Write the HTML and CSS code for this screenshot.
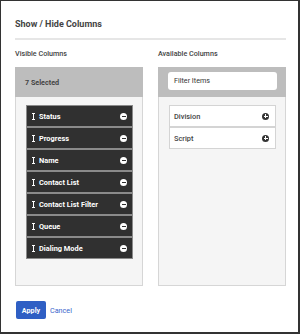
FILE: index.html
```html
<!DOCTYPE html>
<html>
<head>
<meta charset="utf-8">
<link rel="stylesheet" href="styles.css">
</head>
<body>
<div class="dialog">
  <h1 class="title">Show / Hide Columns</h1>
  <div class="divider"></div>
  <div class="columns">
    <div class="col">
      <div class="label">Visible Columns</div>
      <div class="panel">
        <div class="panel-head"><span class="selected">7 Selected</span></div>
        <div class="panel-body">
          <div class="item dark"><span class="grip"></span><span class="name">Status</span><span class="minus"></span></div>
          <div class="item dark"><span class="grip"></span><span class="name">Progress</span><span class="minus"></span></div>
          <div class="item dark"><span class="grip"></span><span class="name">Name</span><span class="minus"></span></div>
          <div class="item dark"><span class="grip"></span><span class="name">Contact List</span><span class="minus"></span></div>
          <div class="item dark"><span class="grip"></span><span class="name">Contact List Filter</span><span class="minus"></span></div>
          <div class="item dark"><span class="grip"></span><span class="name">Queue</span><span class="minus"></span></div>
          <div class="item dark"><span class="grip"></span><span class="name">Dialing Mode</span><span class="minus"></span></div>
        </div>
      </div>
    </div>
    <div class="col">
      <div class="label">Available Columns</div>
      <div class="panel">
        <div class="panel-head"><div class="filter">Filter Items</div></div>
        <div class="panel-body">
          <div class="item light"><span class="name">Division</span><span class="plus"></span></div>
          <div class="item light"><span class="name">Script</span><span class="plus"></span></div>
        </div>
      </div>
    </div>
  </div>
  <div class="actions">
    <button class="apply">Apply</button>
    <span class="cancel">Cancel</span>
  </div>
</div>
</body>
</html>
```
FILE: styles.css
```css
* { box-sizing: border-box; }
html, body { margin: 0; padding: 0; background: #fff; }
body { font-family: Roboto, "Liberation Sans", sans-serif; color: #444; }
.dialog {
  width: 300px; height: 334px;
  border-left: 1px solid #333; border-top: 1px solid #333;
  border-right: 2px solid #333; border-bottom: 2px solid #333;
  padding: 16px 12px 0 14px;
  background: #fff;
}
.title { margin: 0; font-size: 9px; line-height: 14px; font-weight: 700; color: #444; }
.divider { height: 2px; background: #e6e6e6; margin-top: 7px; }
.columns { display: flex; gap: 15px; margin-top: 8px; }
.col { width: 128px; }
.label { font-size: 7.2px; line-height: 12px; font-weight: 500; color: #444; }
.panel { margin-top: 7px; height: 219px; border: 1px solid #d6d6d6; background: #f5f5f5; display: flex; flex-direction: column; }
.panel-head { height: 30px; background: #bdbdbd; display: flex; align-items: center; flex: none; margin: -1px -1px 0 -1px; padding: 0 9px 0 10px; }
.selected { font-size: 7.2px; font-weight: 700; color: #444; }
.filter { width: 100%; height: 18px; background: #fff; border-radius: 3px; font-size: 7.2px; line-height: 18px; padding-left: 6px; color: #333; margin-top: -2px; }
.panel-body { padding: 8px 9px 0 10px; }
.item { height: 22px; display: flex; align-items: center; font-size: 7.4px; font-weight: 700; }
.item.dark { background: #303030; border: 1px solid #8a8a8a; color: #fff; padding: 0 5px 0 5px; }
.item.light { background: #fff; border: 1px solid #d4d4d4; color: #444; padding: 0 5px 0 4px; font-weight: 500; }
.name { flex: 1; }
.grip { width: 1px; height: 7px; background: #fff; margin: 0 5px 0 1px; position: relative; }
.grip::before, .grip::after { content: ""; position: absolute; left: -1px; width: 3px; height: 1px; background: #fff; }
.grip::before { top: 0; }
.grip::after { bottom: 0; }
.minus { width: 7px; height: 7px; border-radius: 50%; background: #fff; position: relative; }
.minus::after { content: ""; position: absolute; left: 1.5px; top: 3px; width: 4px; height: 1px; background: #303030; }
.plus { width: 7px; height: 7px; border-radius: 50%; background: #333; position: relative; margin-right: 1px; }
.plus::before { content: ""; position: absolute; left: 1.5px; top: 3px; width: 4px; height: 1px; background: #fff; }
.plus::after { content: ""; position: absolute; left: 3px; top: 1.5px; width: 1px; height: 4px; background: #fff; }
.actions { display: flex; align-items: center; gap: 4px; margin-top: 15px; padding-left: 1px; }
.apply { width: 30px; height: 18px; border: none; border-radius: 2px; background: #2f5fc4; color: #fff; font-family: Roboto, "Liberation Sans", sans-serif; font-size: 7.2px; font-weight: 700; padding: 0; }
.cancel { font-size: 7.2px; color: #3b66cc; }
```
